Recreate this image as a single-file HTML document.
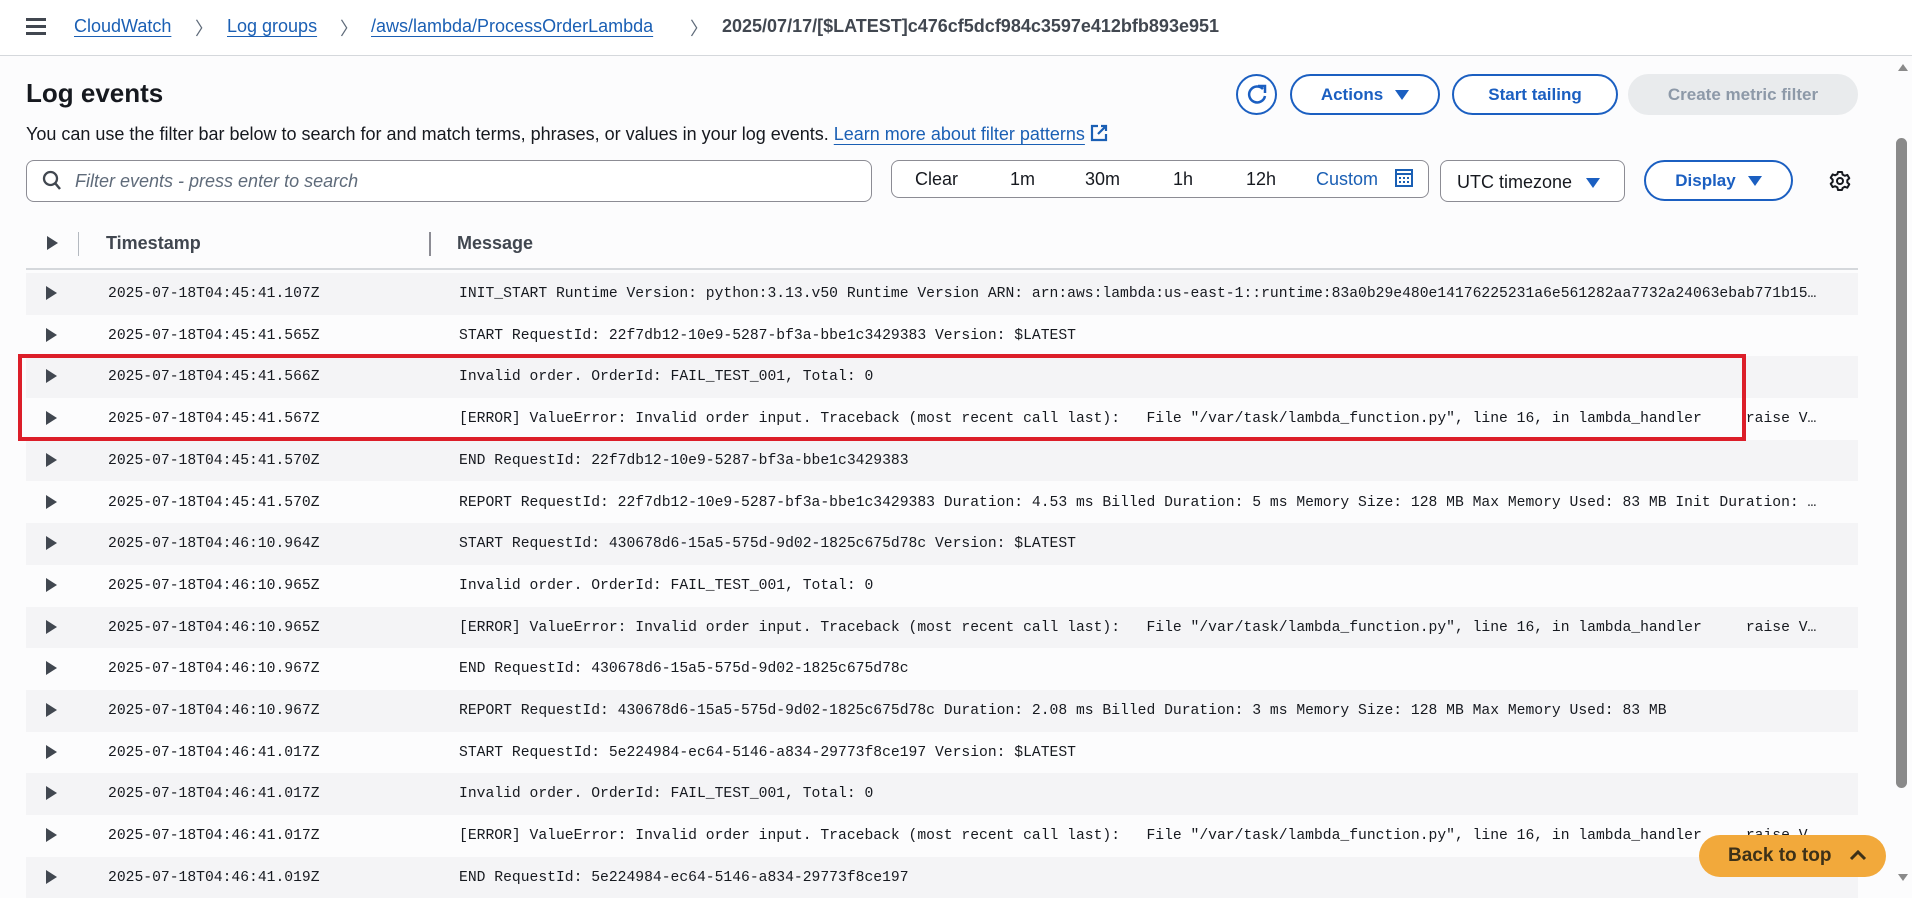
<!DOCTYPE html>
<html><head><meta charset="utf-8"><style>
*{box-sizing:border-box;margin:0;padding:0}
body{width:1912px;height:892px;overflow:hidden;background:#fcfcfd;font-family:"Liberation Sans",sans-serif;color:#16191f;position:relative}
.abs{position:absolute;white-space:nowrap}
.hdr{position:absolute;left:0;top:0;width:1912px;height:56px;background:#fff;border-bottom:1px solid #d5d8dc}
a{color:#1a5fb4;text-decoration:underline;text-underline-offset:4px}
.bc{font-size:18px;top:16px}
.sep{color:#5f6b7a;font-size:18px;top:15px}
.btn{position:absolute;border:2px solid #1b5fc1;border-radius:22px;color:#1b5fc1;font-weight:bold;font-size:17px;display:flex;align-items:center;justify-content:center;background:#fff}
.tri{display:inline-block;width:0;height:0;border-left:7px solid transparent;border-right:7px solid transparent;border-top:10px solid currentColor;margin-left:12px}
.row{position:absolute;left:26px;width:1832px;height:41.7px;font-family:"Liberation Mono",monospace;font-size:14.7px;color:#16191f}
.row.g{background:#f4f4f6}
.row .c{position:absolute;left:20px;top:13px;width:0;height:0;border-top:7px solid transparent;border-bottom:7px solid transparent;border-left:11px solid #414750}
.row .t{position:absolute;left:82px;top:13px}
.row .m{position:absolute;left:433px;top:13px;white-space:pre}
</style></head><body>
<div class="hdr"></div>
<div class="abs" style="left:26px;top:18px;width:20px">
<div style="height:3px;background:#414750;margin-bottom:4px"></div><div style="height:3px;background:#414750;margin-bottom:4px"></div><div style="height:3px;background:#414750"></div></div>
<a class="abs bc" style="left:74px">CloudWatch</a>
<span class="abs sep" style="left:195px">〉</span>
<a class="abs bc" style="left:227px">Log groups</a>
<span class="abs sep" style="left:340px">〉</span>
<a class="abs bc" style="left:371px">/aws/lambda/ProcessOrderLambda</a>
<span class="abs sep" style="left:690px">〉</span>
<span class="abs bc" style="left:722px;color:#414750;font-weight:bold">2025/07/17/[$LATEST]c476cf5dcf984c3597e412bfb893e951</span>

<div class="abs" style="left:26px;top:78px;font-size:26px;font-weight:bold">Log events</div>
<div class="abs" style="left:26px;top:124px;font-size:18px;color:#16191f">You can use the filter bar below to search for and match terms, phrases, or values in your log events. <a>Learn more about filter patterns</a> <svg width="18" height="18" viewBox="0 0 18 18" style="vertical-align:-2px"><path d="M8 2H2v14h14v-6M11 2h5v5M16 2L8 10" fill="none" stroke="#1a5fb4" stroke-width="2.2"/></svg></div>

<div class="btn" style="left:1236px;top:74px;width:41px;height:41px;border-radius:50%"><svg width="22" height="22" viewBox="0 0 22 22"><path d="M17 5A8 8 0 1 0 19 12" fill="none" stroke="#1b5fc1" stroke-width="2.5"/><path d="M12 2h7v7" fill="none" stroke="#1b5fc1" stroke-width="2.5"/></svg></div>
<div class="btn" style="left:1290px;top:74px;width:150px;height:41px">Actions<span class="tri"></span></div>
<div class="btn" style="left:1452px;top:74px;width:166px;height:41px">Start tailing</div>
<div class="btn" style="left:1628px;top:74px;width:230px;height:41px;background:#e9ebed;border-color:#e9ebed;color:#8d99a8">Create metric filter</div>

<div class="abs" style="left:26px;top:160px;width:846px;height:42px;border:1px solid #8c8c94;border-radius:8px;background:#fff"></div>
<svg class="abs" style="left:42px;top:170px" width="20" height="22" viewBox="0 0 20 22"><circle cx="8.5" cy="8.5" r="6.5" fill="none" stroke="#414750" stroke-width="2.3"/><path d="M13 13l5 6" stroke="#414750" stroke-width="2.5"/></svg>
<div class="abs" style="left:75px;top:171px;font-size:18px;font-style:italic;color:#5f6b7a">Filter events - press enter to search</div>

<div class="abs" style="left:891px;top:160px;width:538px;height:38px;border:1px solid #8c8c94;border-radius:8px;background:#fff"></div>
<div class="abs" style="left:915px;top:169px;font-size:18px">Clear</div>
<div class="abs" style="left:1010px;top:169px;font-size:18px">1m</div>
<div class="abs" style="left:1085px;top:169px;font-size:18px">30m</div>
<div class="abs" style="left:1173px;top:169px;font-size:18px">1h</div>
<div class="abs" style="left:1246px;top:169px;font-size:18px">12h</div>
<div class="abs" style="left:1316px;top:169px;font-size:18px;color:#1a5fb4">Custom</div>
<svg class="abs" style="left:1395px;top:169px" width="18" height="18" viewBox="0 0 18 18"><rect x="1" y="1" width="16" height="16" fill="none" stroke="#1a5fb4" stroke-width="2"/><path d="M1 5h16" stroke="#1a5fb4" stroke-width="2"/><g fill="#1a5fb4"><rect x="4" y="8" width="2" height="2"/><rect x="8" y="8" width="2" height="2"/><rect x="12" y="8" width="2" height="2"/><rect x="4" y="12" width="2" height="2"/><rect x="8" y="12" width="2" height="2"/><rect x="12" y="12" width="2" height="2"/></g></svg>

<div class="abs" style="left:1440px;top:160px;width:185px;height:42px;border:1px solid #8c8c94;border-radius:8px;background:#fff;font-size:18px;padding:11px 0 0 16px;color:#16191f">UTC timezone<span class="tri" style="color:#1b5fc1;margin-left:14px"></span></div>
<div class="btn" style="left:1644px;top:160px;width:149px;height:41px">Display<span class="tri"></span></div>
<svg class="abs" style="left:1829px;top:170px" width="22" height="22" viewBox="0 0 22 22"><circle cx="11" cy="11" r="3" fill="none" stroke="#16191f" stroke-width="2"/><path d="M9 2h4l.6 2.6 2.2 1.2 2.5-.9 2 3.4-2 1.8v2.4l2 1.8-2 3.4-2.5-.9-2.2 1.2L13 20H9l-.6-2.6-2.2-1.2-2.5.9-2-3.4 2-1.8V9.6l-2-1.8 2-3.4 2.5.9 2.2-1.2z" fill="none" stroke="#16191f" stroke-width="2" stroke-linejoin="round"/></svg>

<div class="abs" style="left:47px;top:236px;width:0;height:0;border-top:7px solid transparent;border-bottom:7px solid transparent;border-left:11px solid #414750"></div>
<div class="abs" style="left:78px;top:232px;width:1px;height:24px;background:#b4b9c0"></div>
<div class="abs" style="left:106px;top:233px;font-size:18px;font-weight:bold;color:#414750">Timestamp</div>
<div class="abs" style="left:429px;top:232px;width:2px;height:24px;background:#8c8c94"></div>
<div class="abs" style="left:457px;top:233px;font-size:18px;font-weight:bold;color:#414750">Message</div>
<div class="abs" style="left:26px;top:268px;width:1832px;height:2px;background:#d5d8dc"></div>

<div class="row g" style="top:273px"><i class="c"></i><span class="t">2025-07-18T04:45:41.107Z</span><span class="m">INIT_START Runtime Version: python:3.13.v50 Runtime Version ARN: arn:aws:lambda:us-east-1::runtime:83a0b29e480e14176225231a6e561282aa7732a24063ebab771b15…</span></div>
<div class="row" style="top:314.7px"><i class="c"></i><span class="t">2025-07-18T04:45:41.565Z</span><span class="m">START RequestId: 22f7db12-10e9-5287-bf3a-bbe1c3429383 Version: $LATEST</span></div>
<div class="row g" style="top:356.4px"><i class="c"></i><span class="t">2025-07-18T04:45:41.566Z</span><span class="m">Invalid order. OrderId: FAIL_TEST_001, Total: 0</span></div>
<div class="row" style="top:398.1px"><i class="c"></i><span class="t">2025-07-18T04:45:41.567Z</span><span class="m">[ERROR] ValueError: Invalid order input. Traceback (most recent call last):   File "/var/task/lambda_function.py", line 16, in lambda_handler     raise V…</span></div>
<div class="row g" style="top:439.8px"><i class="c"></i><span class="t">2025-07-18T04:45:41.570Z</span><span class="m">END RequestId: 22f7db12-10e9-5287-bf3a-bbe1c3429383</span></div>
<div class="row" style="top:481.5px"><i class="c"></i><span class="t">2025-07-18T04:45:41.570Z</span><span class="m">REPORT RequestId: 22f7db12-10e9-5287-bf3a-bbe1c3429383 Duration: 4.53 ms Billed Duration: 5 ms Memory Size: 128 MB Max Memory Used: 83 MB Init Duration: …</span></div>
<div class="row g" style="top:523.2px"><i class="c"></i><span class="t">2025-07-18T04:46:10.964Z</span><span class="m">START RequestId: 430678d6-15a5-575d-9d02-1825c675d78c Version: $LATEST</span></div>
<div class="row" style="top:564.9px"><i class="c"></i><span class="t">2025-07-18T04:46:10.965Z</span><span class="m">Invalid order. OrderId: FAIL_TEST_001, Total: 0</span></div>
<div class="row g" style="top:606.6px"><i class="c"></i><span class="t">2025-07-18T04:46:10.965Z</span><span class="m">[ERROR] ValueError: Invalid order input. Traceback (most recent call last):   File "/var/task/lambda_function.py", line 16, in lambda_handler     raise V…</span></div>
<div class="row" style="top:648.3px"><i class="c"></i><span class="t">2025-07-18T04:46:10.967Z</span><span class="m">END RequestId: 430678d6-15a5-575d-9d02-1825c675d78c</span></div>
<div class="row g" style="top:690px"><i class="c"></i><span class="t">2025-07-18T04:46:10.967Z</span><span class="m">REPORT RequestId: 430678d6-15a5-575d-9d02-1825c675d78c Duration: 2.08 ms Billed Duration: 3 ms Memory Size: 128 MB Max Memory Used: 83 MB</span></div>
<div class="row" style="top:731.7px"><i class="c"></i><span class="t">2025-07-18T04:46:41.017Z</span><span class="m">START RequestId: 5e224984-ec64-5146-a834-29773f8ce197 Version: $LATEST</span></div>
<div class="row g" style="top:773.4px"><i class="c"></i><span class="t">2025-07-18T04:46:41.017Z</span><span class="m">Invalid order. OrderId: FAIL_TEST_001, Total: 0</span></div>
<div class="row" style="top:815.1px"><i class="c"></i><span class="t">2025-07-18T04:46:41.017Z</span><span class="m">[ERROR] ValueError: Invalid order input. Traceback (most recent call last):   File "/var/task/lambda_function.py", line 16, in lambda_handler     raise V…</span></div>
<div class="row g" style="top:856.8px"><i class="c"></i><span class="t">2025-07-18T04:46:41.019Z</span><span class="m">END RequestId: 5e224984-ec64-5146-a834-29773f8ce197</span></div>

<div class="abs" style="left:18px;top:354px;width:1728px;height:87px;border:4px solid #dc1e29"></div>

<div class="abs" style="left:1699px;top:835px;width:187px;height:42px;border-radius:21px;background:#f2a93b;color:#3d3118;font-weight:bold;font-size:19px;padding:10px 0 0 29px">Back to top <svg width="18" height="12" viewBox="0 0 18 12" style="margin-left:12px"><path d="M2 10l7-7 7 7" fill="none" stroke="#3d3118" stroke-width="3"/></svg></div>

<div class="abs" style="left:1894px;top:56px;width:18px;height:836px;background:#fcfcfd"></div>
<div class="abs" style="left:1898px;top:64px;width:0;height:0;border-left:5px solid transparent;border-right:5px solid transparent;border-bottom:7px solid #8a8a8a"></div>
<div class="abs" style="left:1896px;top:138px;width:11px;height:650px;border-radius:6px;background:#8a8a8a"></div>
<div class="abs" style="left:1898px;top:874px;width:0;height:0;border-left:5px solid transparent;border-right:5px solid transparent;border-top:7px solid #8a8a8a"></div>
</body></html>
